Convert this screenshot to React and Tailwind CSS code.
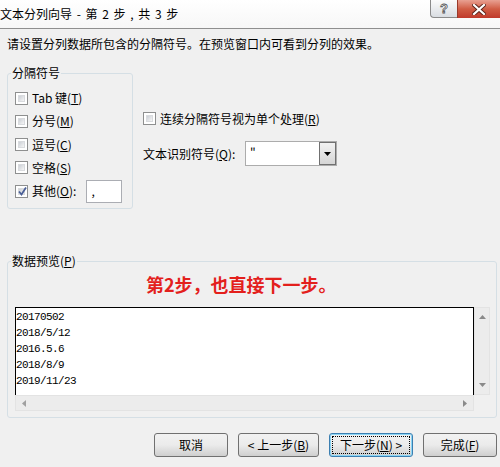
import React from "react";

const FONT = { fontFamily: '"Noto Sans CJK SC", "Microsoft YaHei", sans-serif' };

function Check({ checked }) {
  return (
    <div className="w-[13px] h-[13px] border border-[#8e8f8f] bg-white p-[2px] shrink-0 relative">
      <div className="w-full h-full bg-gradient-to-br from-[#cbcfd5] to-[#f6f6f6] border border-[#d9dbde]" />
      {checked && (
        <svg className="absolute left-[1px] top-[0px]" width="11" height="11" viewBox="0 0 11 11">
          <path d="M2 5.5 L4.5 8.5 L9 1.5" fill="none" stroke="#4a5f97" strokeWidth="1.8" />
        </svg>
      )}
    </div>
  );
}

function Row({ label, acc, tail, checked, children }) {
  return (
    <div className="h-[23.25px] flex items-center gap-[4px]">
      <Check checked={checked} />
      <span className="text-[12px] leading-[16px] text-black whitespace-nowrap">
        {label}(<u>{acc}</u>){tail}
      </span>
      {children}
    </div>
  );
}

function Btn({ children, w, focused }) {
  return (
    <div
      className={`h-[24px] rounded-[3px] border flex items-center justify-center p-[2px] bg-gradient-to-b from-[#f2f2f2] via-[#ebebeb] to-[#cfcfcf] ${
        focused ? "border-[#3c7fb1] shadow-[inset_0_0_0_1px_#8ad5f5]" : "border-[#707070]"
      }`}
      style={{ width: w }}
    >
      <div
        className={`w-full h-full flex items-center justify-center text-[12px] leading-[16px] text-black ${
          focused ? "border border-dotted border-black" : ""
        }`}
      >
        {children}
      </div>
    </div>
  );
}

const lines = ["20170502", "2018/5/12", "2016.5.6", "2018/8/9", "2019/11/23"];

export default function App() {
  return (
    <div className="w-[500px] h-[467px] bg-[#f0f0f0] flex flex-col overflow-hidden" style={FONT}>
      {/* title bar */}
      <div className="h-[29px] border-b border-[#8f8f8f] bg-gradient-to-b from-white to-[#f7f7f7] flex items-start justify-between">
        <div className="h-[28px] flex items-center text-[12px] text-black whitespace-nowrap [word-spacing:2px]">
          文本分列向导 - 第 2 步 , 共 3 步
        </div>
        <div className="flex">
          <div className="w-[27px] h-[18px] border border-t-0 border-r-0 border-[#8a8a8a] rounded-bl-[4px] bg-gradient-to-b from-[#fbfbfb] to-[#d9dde2] flex items-center justify-center">
            <span className="text-[13px] leading-[13px] font-bold text-white" style={{ WebkitTextStroke: "0.8px #555", fontFamily: "Arial, sans-serif" }}>?</span>
          </div>
          <div className="w-[43px] h-[18px] bg-gradient-to-b from-[#e8a092] via-[#d05c44] to-[#c0392b] border-l border-[#9a3a2a] flex items-center justify-center">
            <svg width="14" height="11" viewBox="0 0 14 11">
              <path d="M2 1 L12 10 M12 1 L2 10" stroke="#5a2219" strokeWidth="4" strokeLinecap="square" />
              <path d="M2 1 L12 10 M12 1 L2 10" stroke="#ffffff" strokeWidth="2.2" strokeLinecap="square" />
            </svg>
          </div>
        </div>
      </div>

      <div className="px-[7px] flex flex-col">
        <div className="mt-[7px] h-[16px] text-[12px] leading-[16px] text-black whitespace-nowrap">
          请设置分列数据所包含的分隔符号。在预览窗口内可看到分列的效果。
        </div>

        <div className="mt-[21px] flex items-start">
          {/* group 1 */}
          <div className="relative w-[126px] h-[136px] border border-[#d5dfe5] rounded-[3px] pl-[7px] pt-[12.4px]">
            <div className="absolute -top-[9px] left-[3px] px-[1px] bg-[#f0f0f0] text-[12px] leading-[16px] text-black">
              分隔符号
            </div>
            <Row label="Tab 键" acc="T" />
            <Row label="分号" acc="M" />
            <Row label="逗号" acc="C" />
            <Row label="空格" acc="S" />
            <Row label="其他" acc="O" tail=":" checked>
              <div className="ml-[6px] w-[36px] h-[23px] bg-white border border-[#abadb3] flex items-center pl-[4px] text-[12px]">
                ,
              </div>
            </Row>
          </div>

          {/* right column */}
          <div className="ml-[10px] flex flex-col">
            <div className="mt-[37.5px] h-[16px] flex items-center gap-[4px]">
              <Check />
              <span className="text-[12px] leading-[16px] text-black whitespace-nowrap">
                连续分隔符号视为单个处理(<u>R</u>)
              </span>
            </div>
            <div className="mt-[14.5px] flex items-center">
              <span className="w-[102px] text-[12px] leading-[16px] text-black whitespace-nowrap">
                文本识别符号(<u>Q</u>):
              </span>
              <div className="w-[92px] h-[25px] border border-[#acacac] bg-white flex">
                <div className="flex-1 pl-[4px] text-[12px] leading-[16px] pt-[2px]">"</div>
                <div className="w-[17px] h-full border border-[#707070] bg-gradient-to-b from-[#f2f2f2] to-[#d5d5d5] flex items-center justify-center">
                  <svg width="7" height="4" viewBox="0 0 7 4">
                    <path d="M0 0 L7 0 L3.5 4 Z" fill="#000" />
                  </svg>
                </div>
              </div>
            </div>
          </div>
        </div>

        {/* group 2 */}
        <div className="mt-[52px] relative w-[490px] h-[157px] border border-[#d5dfe5] rounded-[3px]">
          <div className="absolute -top-[9px] left-[3px] px-[1px] bg-[#f0f0f0] text-[12px] leading-[16px] text-black">
            数据预览(<u>P</u>)
          </div>
          <div className="pt-[12px] pl-[138px] h-[32px] text-[18px] leading-[20px] font-bold text-[#e3201c] whitespace-nowrap">
            第2步，也直接下一步。
          </div>
          <div className="mt-[13px] ml-[7px] grid grid-cols-[459px_16px] grid-rows-[88px_16px]">
            <div className="border-l border-t border-r border-black bg-white pt-[1px]">
              {lines.map((l) => (
                <div
                  key={l}
                  className="h-[16px] leading-[16px] text-[11px] text-black tracking-[-0.6px]"
                  style={{ fontFamily: '"Liberation Mono", monospace' }}
                >
                  {l}
                </div>
              ))}
            </div>
            <div className="bg-[#ececec] border border-[#e3e3e3] flex flex-col items-center justify-between py-[7px]">
              <svg width="7" height="4" viewBox="0 0 7 4">
                <path d="M0 4 L7 4 L3.5 0 Z" fill="#8a8a8a" />
              </svg>
              <svg width="7" height="4" viewBox="0 0 7 4">
                <path d="M0 0 L7 0 L3.5 4 Z" fill="#8a8a8a" />
              </svg>
            </div>
            <div className="bg-[#ececec] border border-[#e3e3e3] flex items-center justify-between px-[6px]">
              <svg width="4" height="7" viewBox="0 0 4 7">
                <path d="M4 0 L4 7 L0 3.5 Z" fill="#a0a0a0" />
              </svg>
              <svg width="4" height="7" viewBox="0 0 4 7">
                <path d="M0 0 L0 7 L4 3.5 Z" fill="#8a8a8a" />
              </svg>
            </div>
            <div className="bg-[#f0f0f0]" />
          </div>
        </div>

        {/* buttons */}
        <div className="mt-[15px] flex justify-end gap-[10px] mr-[-4px]">
          <Btn w="74px">取消</Btn>
          <Btn w="81px">&lt; 上一步(<u>B</u>)</Btn>
          <Btn w="84px" focused>下一步(<u>N</u>) &gt;</Btn>
          <Btn w="74px">完成(<u>F</u>)</Btn>
        </div>
      </div>
    </div>
  );
}
